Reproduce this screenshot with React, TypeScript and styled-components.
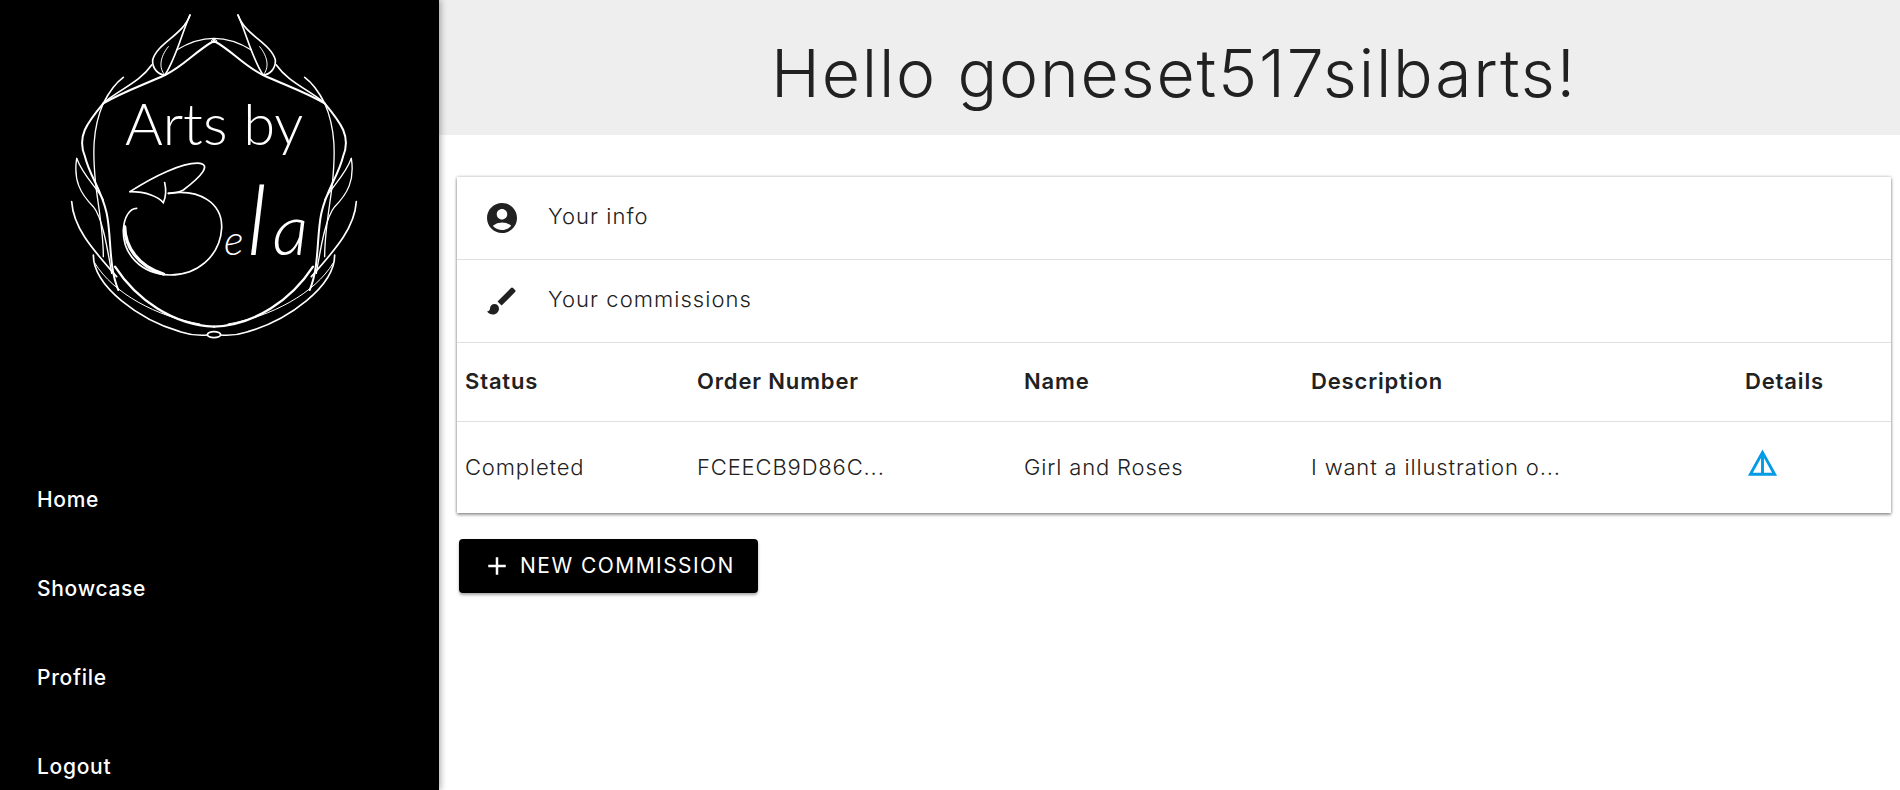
import React from 'react';
import styled, { createGlobalStyle } from 'styled-components';
import { MdAccountCircle, MdAdd, MdBrush } from 'react-icons/md';

const GlobalStyle = createGlobalStyle`
    html, body {
        margin: 0;
        height: 100%;
        overflow: hidden;
        background: #fff;
    }
    body {
        font-family: Inter, "Open Sans", sans-serif;
        color: #212121;
    }
`;

const Page = styled.div`
    display: flex;
    width: 1900px;
    height: 790px;
    overflow: hidden;
`;

const Sidebar = styled.aside`
    width: 439px;
    flex: none;
    background: #000;
    box-shadow: 2px 0 6px rgba(0, 0, 0, 0.3);
    position: relative;
    z-index: 1;
    display: flex;
    flex-direction: column;
`;

const LogoWrap = styled.div`
    height: 455px;
    flex: none;
    padding-left: 40px;
`;

const NavList = styled.nav`
    display: flex;
    flex-direction: column;
`;

const NavItem = styled.a`
    height: 89px;
    flex: none;
    padding-left: 37px;
    display: flex;
    align-items: center;
    color: #fff;
    font-size: 21px;
    font-weight: 500;
    letter-spacing: 0.7px;
`;

const Main = styled.main`
    flex: 1;
    display: flex;
    flex-direction: column;
    min-width: 0;
`;

const Header = styled.header`
    height: 135px;
    background: #eeeeee;
    display: flex;
    align-items: center;
    justify-content: center;
`;

const Title = styled.h1`
    margin: 11px 0 0 9px;
    font-size: 66px;
    font-weight: 300;
    letter-spacing: 1.8px;
    color: #212121;
`;

const Content = styled.div`
    padding: 42px 9px 0 18px;
`;

const Panel = styled.section`
    background: #fff;
    box-shadow: 0 2px 3px rgba(0, 0, 0, 0.35), 0 0 3px rgba(0, 0, 0, 0.3);
`;

const ListRow = styled.div`
    height: 82px;
    border-bottom: 1px solid #e0e0e0;
    display: flex;
    align-items: center;
    padding-left: 27px;
    font-size: 22px;
    font-weight: 300;
    letter-spacing: 1.05px;
`;

const ListLabel = styled.span`
    margin-top: -4px;
`;

const ListIcon = styled.span`
    width: 64px;
    flex: none;
    display: flex;
    font-size: 36px;
    color: #212121;
`;

const Table = styled.table`
    width: 100%;
    table-layout: fixed;
    border-collapse: collapse;
    font-size: 22px;
    letter-spacing: 0.85px;
`;

const HeadCell = styled.th<{ $width: number }>`
    box-sizing: border-box;
    width: ${({ $width }) => $width}px;
    height: 78px;
    padding: 0 0 2px 8px;
    text-align: left;
    font-weight: 600;
    border-bottom: 1px solid #e0e0e0;
`;

const Cell = styled.td`
    height: 91px;
    padding: 0 0 0 8px;
    font-weight: 300;
    white-space: nowrap;
`;

const DetailsLink = styled.a`
    display: inline-flex;
    margin-top: -4px;
    color: #039be5;
`;

const NewButton = styled.button`
    margin: 26px 0 0 2px;
    width: 299px;
    height: 54px;
    border: 0;
    border-radius: 4px;
    background: #000;
    color: #fff;
    display: flex;
    align-items: center;
    justify-content: center;
    gap: 8px;
    font: 400 21px Inter, sans-serif;
    letter-spacing: 1.45px;
    box-shadow: 0 2px 3px rgba(0, 0, 0, 0.35);
`;

const wreathHalf = (
    <>
        <path d="M375 225 C430 200 470 150 522 123" strokeWidth="6" />
        <path d="M410 150 C450 125 490 115 522 115" strokeWidth="4" />
        <path d="M450 45 C430 105 350 130 338 180 C336 205 355 225 375 225" strokeWidth="5" />
        <path d="M450 45 C425 100 410 170 375 225" strokeWidth="5" />
        <path d="M385 140 C360 170 355 205 375 225" strokeWidth="3" />
        <path d="M375 225 C310 255 250 275 190 310" strokeWidth="6" />
        <path d="M335 195 C300 245 245 265 195 305" strokeWidth="5" />
        <path d="M250 232 C225 250 205 280 190 310" strokeWidth="5" />
        <path d="M190 310 C140 370 110 410 135 470 C150 530 185 570 200 640 C215 710 205 800 235 870" strokeWidth="6" />
        <path d="M190 310 C155 390 160 470 165 530 C170 600 190 680 190 770" strokeWidth="4" />
        <path d="M110 475 C100 540 120 580 160 620 C185 650 200 730 215 820" strokeWidth="4" />
        <path d="M110 475 C130 530 170 560 190 600" strokeWidth="4" />
        <path d="M95 605 C100 680 150 740 230 830" strokeWidth="5" />
        <path d="M225 800 C290 900 400 975 522 980" strokeWidth="7" />
        <path d="M160 765 C160 860 300 960 420 995 C450 1005 480 1007 503 1005" strokeWidth="5" />
        <path d="M165 790 C220 880 350 950 480 972" strokeWidth="3" />
    </>
);

const Logo = () => (
    <svg width="360" height="350" viewBox="0 0 1080 1050" fill="none" stroke="#fff" strokeLinecap="round">
        <g>{wreathHalf}</g>
        <g transform="translate(1044 0) scale(-1 1)">{wreathHalf}</g>
        <ellipse cx="522" cy="1004" rx="20" ry="9" strokeWidth="5" />
        <ellipse cx="522" cy="123" rx="8" ry="5" strokeWidth="3" />
        <path d="M270 575 C340 530 430 485 480 490 C510 495 490 525 430 570 C415 578 400 580 385 580" strokeWidth="5" />
        <path d="M270 575 C320 575 355 590 370 608 C378 590 378 565 374 548" strokeWidth="5" />
        <path d="M385 580 C480 565 548 610 545 685 C540 770 470 825 390 825 C300 822 248 760 250 690 C252 650 270 625 290 625" strokeWidth="5" />
        <path d="M254 680 C255 740 295 800 370 822" strokeWidth="10" />
        <text x="255" y="435" fill="#fff" stroke="none" fontFamily="Lato, Inter, sans-serif" fontWeight="300" fontSize="170" textLength="535" lengthAdjust="spacingAndGlyphs">Arts by</text>
        <text x="552" y="765" fill="#fff" stroke="none" fontFamily="Lato, sans-serif" fontWeight="300" fontStyle="italic">
            <tspan fontSize="125">e</tspan>
            <tspan fontSize="290" dx="10">l</tspan>
            <tspan fontSize="215" dx="16">a</tspan>
        </text>
    </svg>
);

const DetailsIcon = () => (
    <svg width="35" height="35" viewBox="0 0 24 24" fill="currentColor">
        <path d="M12 3L2 21h20L12 3zm1 5.92L18.6 19H13V8.92zm-2 0V19H5.4L11 8.92z" />
    </svg>
);

const navItems = ['Home', 'Showcase', 'Profile', 'Logout'];
const columns = [
    { label: 'Status', width: 232 },
    { label: 'Order Number', width: 327 },
    { label: 'Name', width: 287 },
    { label: 'Description', width: 434 },
    { label: 'Details', width: 154 },
];

export default function App() {
    return (
        <Page>
            <GlobalStyle />
            <Sidebar>
                <LogoWrap>
                    <Logo />
                </LogoWrap>
                <NavList>
                    {navItems.map((item) => (
                        <NavItem key={item}>{item}</NavItem>
                    ))}
                </NavList>
            </Sidebar>
            <Main>
                <Header>
                    <Title>Hello goneset517silbarts!</Title>
                </Header>
                <Content>
                    <Panel>
                        <ListRow>
                            <ListIcon><MdAccountCircle /></ListIcon>
                            <ListLabel>Your info</ListLabel>
                        </ListRow>
                        <ListRow>
                            <ListIcon><MdBrush /></ListIcon>
                            <ListLabel>Your commissions</ListLabel>
                        </ListRow>
                        <Table>
                            <thead>
                                <tr>
                                    {columns.map((col) => (
                                        <HeadCell key={col.label} $width={col.width}>{col.label}</HeadCell>
                                    ))}
                                </tr>
                            </thead>
                            <tbody>
                                <tr>
                                    <Cell>Completed</Cell>
                                    <Cell>FCEECB9D86C...</Cell>
                                    <Cell>Girl and Roses</Cell>
                                    <Cell>I want a illustration o...</Cell>
                                    <Cell><DetailsLink><DetailsIcon /></DetailsLink></Cell>
                                </tr>
                            </tbody>
                        </Table>
                    </Panel>
                    <NewButton><MdAdd size={30} />NEW COMMISSION</NewButton>
                </Content>
            </Main>
        </Page>
    );
}
